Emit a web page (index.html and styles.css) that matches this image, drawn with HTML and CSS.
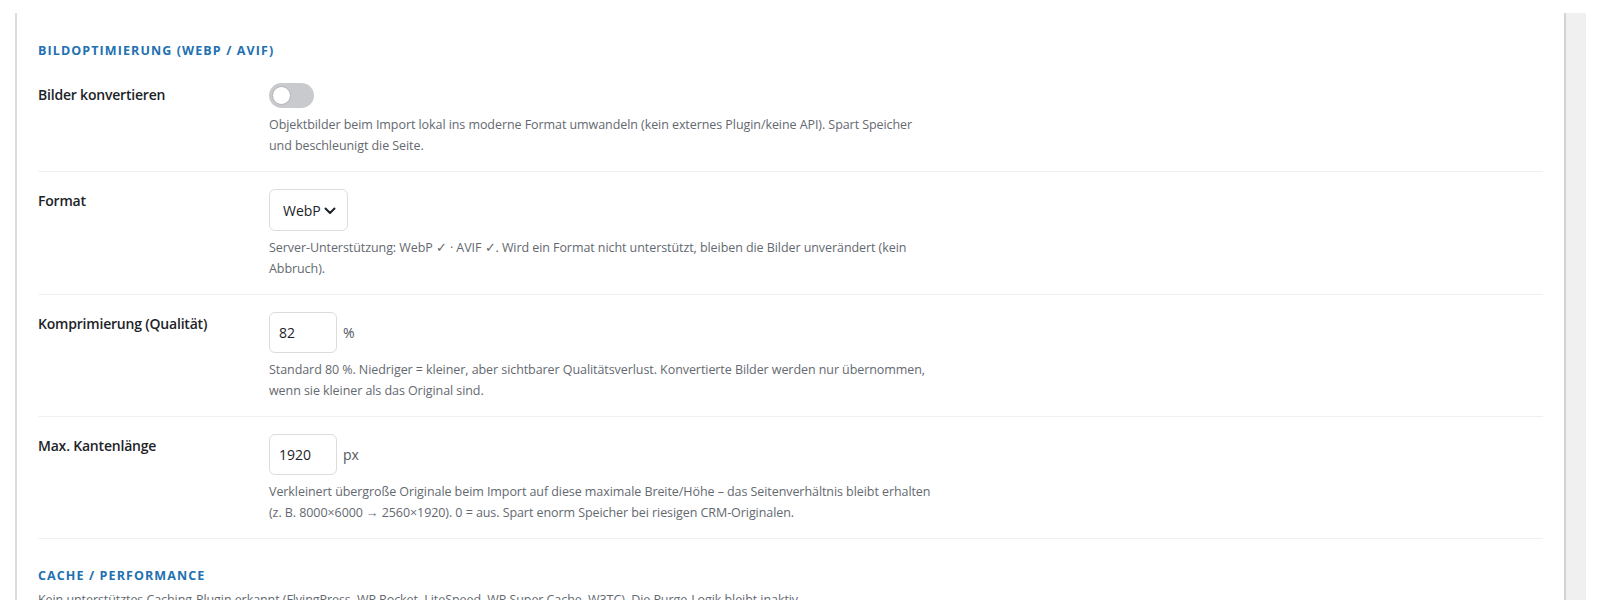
FILE: index.html
```html
<!DOCTYPE html>
<html lang="de">
<head>
    <meta charset="UTF-8">
    <meta name="viewport" content="width=device-width, initial-scale=1.0">
    <title>Einstellungen</title>
    <link rel="stylesheet" href="styles.css">
</head>
<body>

<div class="page">
    <div class="panel">
        <h2 class="section-title">Bildoptimierung (WebP / AVIF)</h2>

        <div class="setting-row first-row">
            <div class="setting-label">Bilder konvertieren</div>
            <div class="setting-field">
                <label class="switch">
                    <input type="checkbox">
                    <span class="switch-slider"></span>
                </label>
                <p class="description">Objektbilder beim Import lokal ins moderne Format umwandeln (kein externes Plugin/keine API). Spart Speicher und beschleunigt die Seite.</p>
            </div>
        </div>

        <div class="setting-row">
            <div class="setting-label">Format</div>
            <div class="setting-field">
                <div class="select-box">
                    <span>WebP</span>
                    <svg class="chevron" viewBox="0 0 12 8" width="12" height="8">
                        <path d="M1.5 1.5 L6 6 L10.5 1.5" fill="none" stroke="#1d2327" stroke-width="2" stroke-linecap="round" stroke-linejoin="round"/>
                    </svg>
                </div>
                <p class="description">Server-Unterstützung: WebP ✓ · AVIF ✓. Wird ein Format nicht unterstützt, bleiben die Bilder unverändert (kein Abbruch).</p>
            </div>
        </div>

        <div class="setting-row">
            <div class="setting-label">Komprimierung (Qualität)</div>
            <div class="setting-field">
                <div class="input-line">
                    <input class="small-input" type="text" value="82">
                    <span class="unit">%</span>
                </div>
                <p class="description">Standard 80 %. Niedriger = kleiner, aber sichtbarer Qualitätsverlust. Konvertierte Bilder werden nur übernommen, wenn sie kleiner als das Original sind.</p>
            </div>
        </div>

        <div class="setting-row">
            <div class="setting-label">Max. Kantenlänge</div>
            <div class="setting-field">
                <div class="input-line">
                    <input class="small-input" type="text" value="1920">
                    <span class="unit">px</span>
                </div>
                <p class="description">Verkleinert übergroße Originale beim Import auf diese maximale Breite/Höhe – das Seitenverhältnis bleibt erhalten (z. B. 8000×6000 → 2560×1920). 0 = aus. Spart enorm Speicher bei riesigen CRM-Originalen.</p>
            </div>
        </div>

        <h2 class="section-title section-next">Cache / Performance</h2>
        <p class="section-note">Kein unterstütztes Caching-Plugin erkannt (FlyingPress, WP Rocket, LiteSpeed, WP Super Cache, W3TC). Die Purge-Logik bleibt inaktiv.</p>
    </div>
    <div class="side-track"></div>
</div>

</body>
</html>
```

FILE: styles.css
```css
html, body {
    margin: 0;
    height: 100%;
    overflow: hidden;
}

body {
    background-color: #fff;
    font-family: "Open Sans", "Noto Sans", sans-serif;
    color: #1d2327;
}

.page {
    display: flex;
    align-items: flex-start;
    padding: 13px 14px 0 15px;
}

/* scroll area, clipped at the bottom */
.panel {
    flex: 1;
    height: 587px;
    overflow: hidden;
    border-left: 2px solid #dcdcde;
    padding: 0 21px;
}

.side-track {
    width: 20px;
    height: 587px;
    background-color: #f0f0f1;
    border-left: 2px solid #d3d3d5;
}

.section-title {
    margin: 0;
    padding-top: 29px;
    font-size: 12.5px;
    font-weight: 700;
    line-height: 18px;
    letter-spacing: 1.1px;
    text-transform: uppercase;
    color: #2271b1;
}

.section-next {
    padding-top: 28px;
}

.section-note {
    margin: 5px 0 0;
    font-size: 12.5px;
    line-height: 20.5px;
    letter-spacing: -0.07px;
    color: #646970;
    white-space: nowrap;
}

.setting-row {
    display: flex;
    border-bottom: 1px solid #f0f0f1;
    padding: 17px 0 15px;
}

.first-row {
    padding-top: 23px;
}

.setting-label {
    width: 231px;
    flex-shrink: 0;
    font-size: 14px;
    font-weight: 600;
    line-height: 20px;
    letter-spacing: -0.2px;
    padding-top: 2px;
}

.setting-field {
    flex: 1;
}

.description {
    margin: 7px 0 0;
    max-width: 664px;
    font-size: 12.5px;
    line-height: 20.5px;
    letter-spacing: -0.07px;
    color: #646970;
}

/* toggle */
.switch {
    position: relative;
    display: block;
    width: 45px;
    height: 25px;
}

.switch input {
    display: none;
}

.switch-slider {
    position: absolute;
    inset: 0;
    background-color: #c9cacd;
    border-radius: 13px;
    cursor: pointer;
}

.switch-slider::before {
    content: "";
    position: absolute;
    left: 3px;
    top: 3px;
    width: 17px;
    height: 17px;
    border-radius: 50%;
    background-color: #fff;
    border: 1px solid #b4b5b8;
}

/* select */
.select-box {
    display: inline-flex;
    align-items: center;
    gap: 3px;
    height: 40px;
    padding: 0 11px 0 13px;
    border: 1px solid #dcdcde;
    border-radius: 6px;
    font-size: 14px;
}

.chevron {
    margin-top: 1px;
}

/* number inputs */
.input-line {
    display: flex;
    align-items: center;
    gap: 6px;
}

.small-input {
    box-sizing: border-box;
    width: 68px;
    height: 41px;
    padding: 0 9px;
    border: 1px solid #dcdcde;
    border-radius: 6px;
    font-family: inherit;
    font-size: 14px;
    color: #1d2327;
}

.unit {
    font-size: 14px;
    color: #50575e;
}
```
